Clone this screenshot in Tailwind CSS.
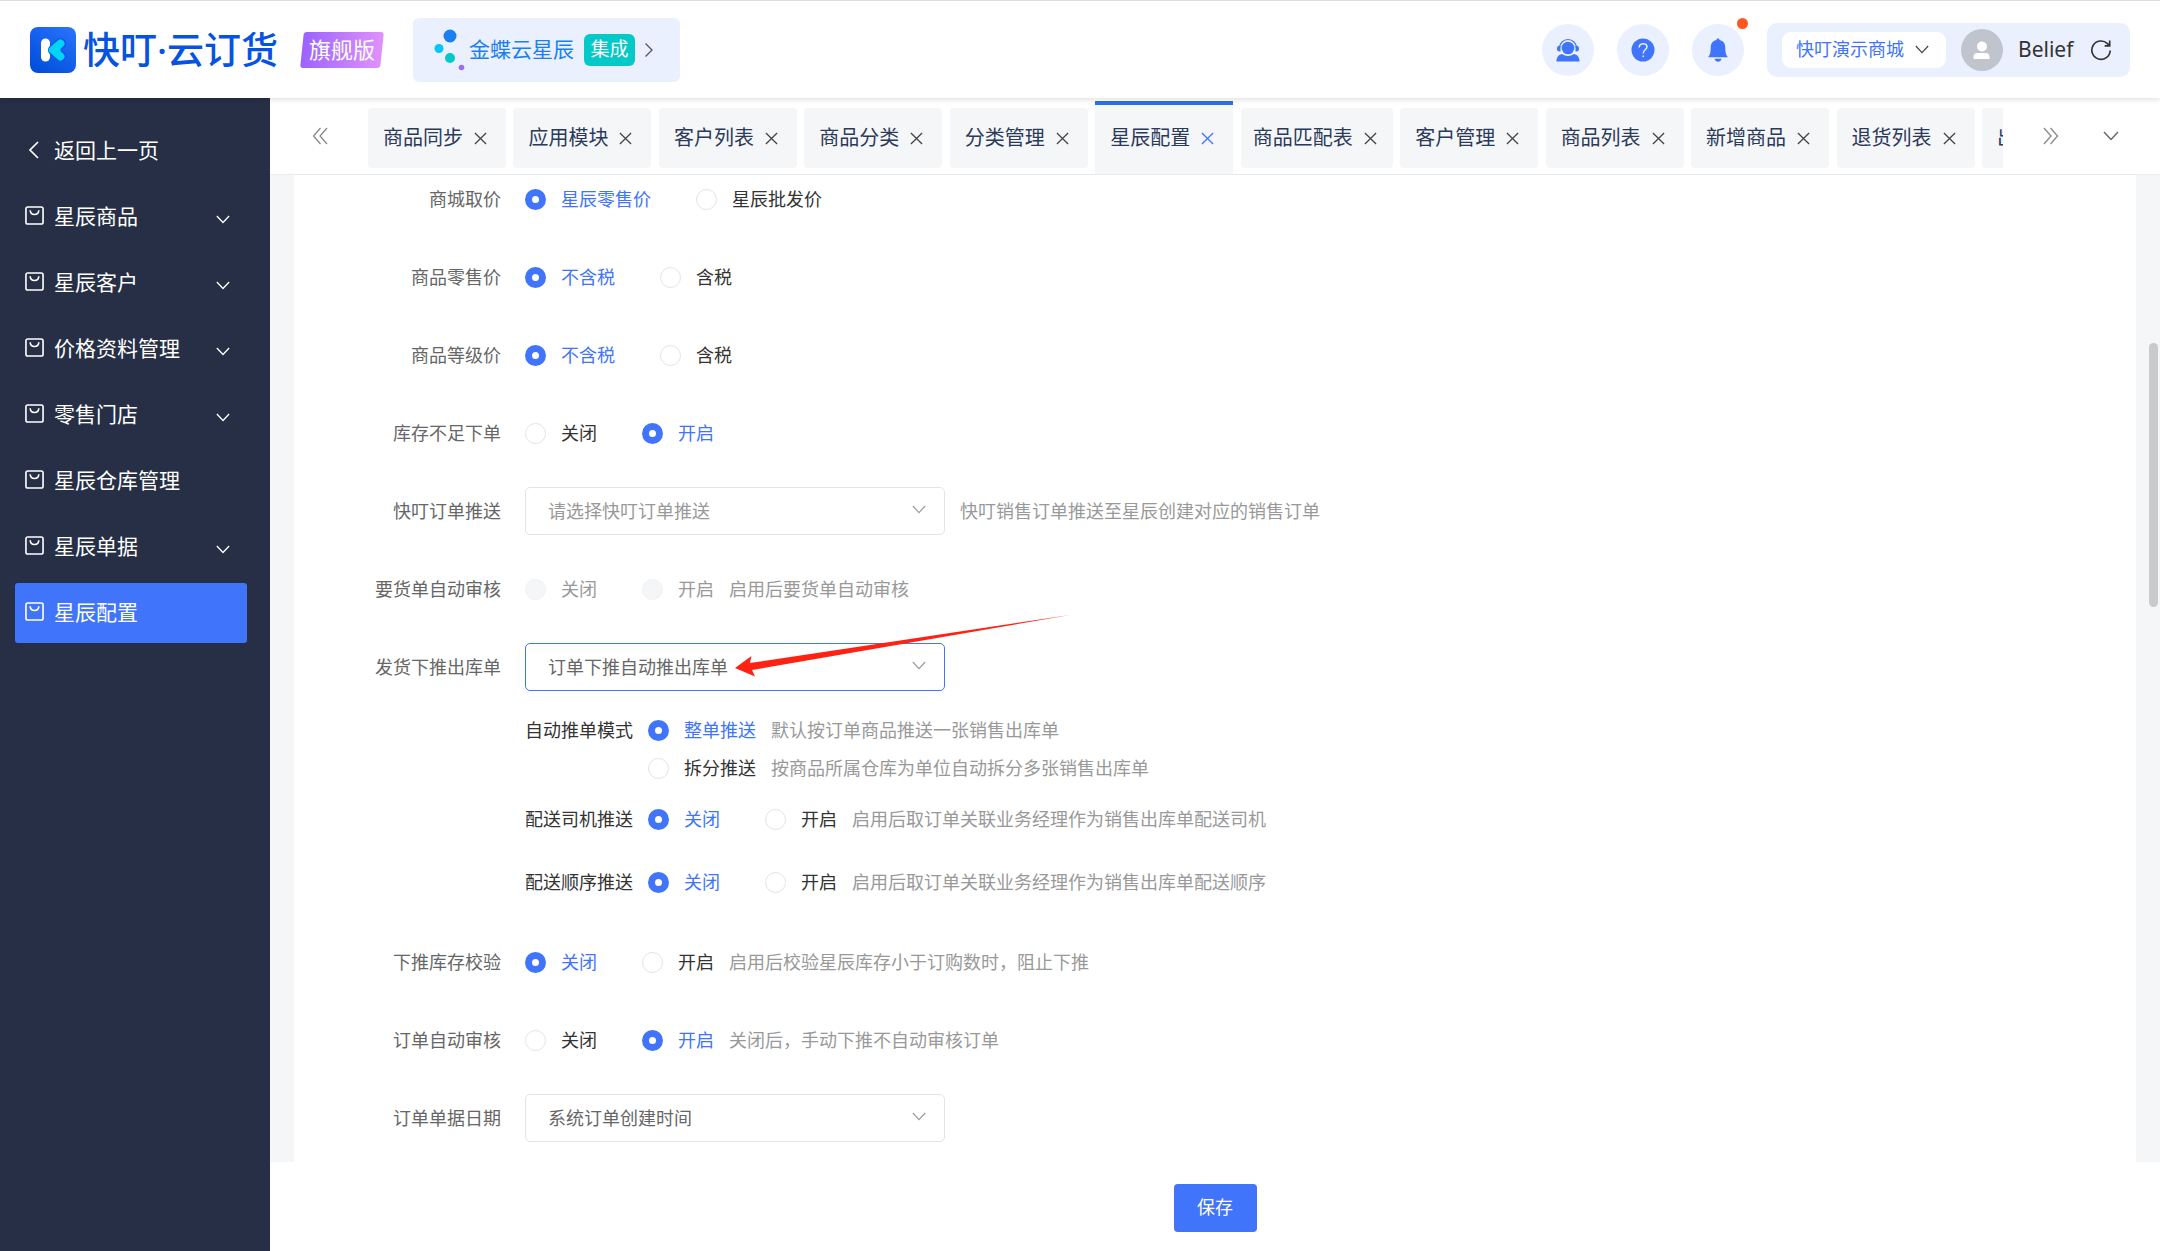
<!DOCTYPE html>
<html lang="zh-CN">
<head>
  <meta charset="UTF-8" />
  <meta name="viewport" content="width=device-width, initial-scale=1.0"/>
  <title>星辰配置 - 快叮云订货</title>
  <script src="https://cdn.jsdelivr.net/npm/@tailwindcss/browser@4"></script>
</head>
<body class="h-screen flex flex-col overflow-hidden bg-white text-[18px] text-[#333] font-['Noto_Sans','Noto_Sans_CJK_SC',sans-serif]">

  <!-- Shared icons -->
  <svg class="hidden" fill="none" stroke="currentColor">
    <symbol id="down" viewBox="0 0 16 10"><path d="M1 1l7 7.500l7-7.500" /></symbol>
    <symbol id="close" viewBox="0 0 14 14"><path d="M1 1l12 12M13 1l-12 12" /></symbol>
    <symbol id="bag" viewBox="0 0 20 20"><rect x="1" y="1" width="18" height="18" rx="2" /><path d="M5.500 4.500c0 6 9 6 9 0" /></symbol>
  </svg>

  <header class="relative z-10 h-[98px] shrink-0 flex items-center pl-[30px] pr-[30px] bg-white border-t border-[#ddd] shadow-[0_1px_6px_rgba(0,0,0,0.15)]">
    <a href="#" class="flex items-center gap-[7px] text-[#0553e0]">
      <svg class="size-[46px]" viewBox="0 0 46 46">
        <defs>
          <linearGradient id="logoBg" x1="1" y1="0" x2="0.300" y2="1"><stop stop-color="#2b74ff" /><stop offset="1" stop-color="#0250dc" /></linearGradient>
        </defs>
        <rect width="46" height="46" rx="8" fill="url(#logoBg)" />
        <path d="M15.500 16v14" stroke="#fff" stroke-width="9" stroke-linecap="round" />
        <path d="M30.500 16.500l-7 6.500l7 6.500" fill="#00d5f7" stroke="#0a58e4" stroke-width="11" stroke-linecap="round" stroke-linejoin="round" />
        <path d="M30.500 16.500l-7.500 6.500l7.500 6.500" fill="#00d5f7" stroke="#00d5f7" stroke-width="8" stroke-linecap="round" stroke-linejoin="round" />
      </svg>
      <span class="text-[37px] leading-[46px] font-medium whitespace-nowrap">快叮·云订货</span>
    </a>
    <div class="relative isolate ml-[22px] h-9 w-[84px] flex items-center justify-center text-[22px] text-white whitespace-nowrap">
      <span class="absolute inset-x-[2px] inset-y-0 -z-10 rounded-[3px] -skew-x-6 bg-linear-to-r from-[#9c62ff] to-[#e090fb]"></span>
      旗舰版
    </div>
    <a href="#" class="ml-[29px] h-16 w-[267px] flex items-center pl-[21px] rounded-md bg-[#eaf0fe] text-[21px] text-[#1a80f2] whitespace-nowrap">
      <svg class="w-[32px] h-[44px] shrink-0" viewBox="0 0 32 44">
        <circle cx="16" cy="8" r="6.500" fill="#1a80f2" />
        <circle cx="5" cy="20.500" r="4.500" fill="#04c6fd" />
        <circle cx="16" cy="30" r="5" fill="#05c8c8" />
        <circle cx="27.500" cy="39.500" r="2.800" fill="#9d6cf0" />
      </svg>
      <span class="ml-[3px]">金蝶云星辰</span>
      <span class="ml-[10px] h-8 w-[51px] flex items-center justify-center rounded-md bg-[#05c8c8] text-[19px] text-white">集成</span>
      <svg class="ml-[9px] w-[10px] h-4" viewBox="0 0 10 16" fill="none" stroke="#555" stroke-width="1.300"><path d="M1.500 1.500l6.500 6.500l-6.500 6.500" /></svg>
    </a>

    <div class="ml-auto flex items-center gap-[23px]">
      <button aria-label="客服" class="size-[52px] rounded-full bg-[#eaf0fe] flex items-center justify-center">
        <svg class="size-6" viewBox="0 0 24 24" fill="#4074fb">
          <circle cx="12" cy="10" r="6.300" />
          <path d="M3.500 10a8.500 8.500 0 0 1 17 0" fill="none" stroke="#4074fb" stroke-width="1.200" />
          <path d="M4.500 7.500v6c-3 0-3.500-1.200-3.500-3s1-3 3.500-3zM19.500 7.500v6c3 0 3.500-1.200 3.500-3s-1-3-3.500-3z" />
          <path d="M.5 23.500c0-4 1.500-6.500 5.500-7.500c3.500 2.600 8.500 2.600 12 0c4 1 5.500 3.500 5.500 7.500z" />
        </svg>
      </button>
      <button aria-label="帮助" class="size-[52px] rounded-full bg-[#eaf0fe] flex items-center justify-center">
        <svg class="size-6" viewBox="0 0 24 24" fill="none">
          <circle cx="12" cy="12" r="11.500" fill="#4074fb" />
          <path d="M8.200 9.500c0-5 7.800-5 7.800-.8c0 3-3.800 3.200-3.800 6.800M12.200 17.500v1.500" stroke="#eaf0fe" stroke-width="1.500" />
        </svg>
      </button>
      <button aria-label="消息" class="relative size-[52px] rounded-full bg-[#eaf0fe] flex items-center justify-center">
        <svg class="size-6" viewBox="0 0 24 24" fill="#4074fb">
          <path d="M12 0.500c1 0 1.500.7 1.600 1.600c4 .8 5.700 3.800 5.700 7.500c0 5 .5 7 2.200 8.900v.8h-19v-.8c1.700-1.900 2.200-3.900 2.200-8.900c0-3.700 1.700-6.700 5.700-7.500c.1-.9.6-1.600 1.600-1.600z" />
          <path d="M8.500 20.700h7c-.5 4-6.500 4-7 0z" />
        </svg>
        <span class="absolute -top-[6px] -right-[4px] size-[11px] rounded-full bg-[#ff5722]"></span>
      </button>
      <div class="h-[54px] flex items-center pl-[15px] pr-[18px] rounded-[10px] bg-[#eaf0fe]">
        <button class="h-9 w-[164px] flex items-center pl-[14px] gap-[11px] rounded-[9px] bg-white text-[#4074fb] whitespace-nowrap">
          快叮演示商城
          <svg class="w-[14px] h-[9px] text-[#444]" fill="none" stroke="currentColor" stroke-width="1.400"><use href="#down" /></svg>
        </button>
        <svg class="ml-[15px] size-[42px]" viewBox="0 0 42 42">
          <circle cx="21" cy="21" r="21" fill="#c0c4cc" />
          <circle cx="21" cy="17.500" r="5" fill="#fff" />
          <path d="M12.500 30v-2c0-2.500 1.500-4 4-4h8c2.500 0 4 1.500 4 4v2z" fill="#fff" />
        </svg>
        <span class="ml-[15px] w-[58px] text-[21px] whitespace-nowrap">Belief</span>
        <button aria-label="刷新" class="ml-[14px]">
          <svg class="size-[22px]" viewBox="0 0 24 24" fill="none" stroke="#333" stroke-width="1.800"><path d="M22 12.500a10 10 0 1 1-3-7.500l2 2M21.500 1.500v6h-5.500" /></svg>
        </button>
      </div>
    </div>
  </header>

  <div class="flex-1 min-h-0 flex">
    <!-- Sidebar -->
    <aside class="w-[270px] shrink-0 bg-[#262f45] pl-[15px] pr-[23px] pt-[23px] text-[21px] text-white">
      <nav class="flex flex-col gap-[6px]">
        <a href="#" class="h-[60px] flex items-center pl-[12px] gap-[13px]">
          <svg class="mb-[3px] w-[14px] h-5" viewBox="0 0 14 20" fill="none" stroke="currentColor" stroke-width="1.700"><path d="M11 2l-8 8l8 8" /></svg>
          返回上一页
        </a>
        <a href="#" class="h-[60px] flex items-center pl-[10px] pr-[17px] gap-[10px]">
          <svg class="mb-[3px] size-[19px]" fill="none" stroke="currentColor" stroke-width="1.700"><use href="#bag" /></svg>
          星辰商品
          <svg class="ml-auto mt-[5px] w-[14px] h-[9px]" fill="none" stroke="currentColor" stroke-width="1.500"><use href="#down" /></svg>
        </a>
        <a href="#" class="h-[60px] flex items-center pl-[10px] pr-[17px] gap-[10px]">
          <svg class="mb-[3px] size-[19px]" fill="none" stroke="currentColor" stroke-width="1.700"><use href="#bag" /></svg>
          星辰客户
          <svg class="ml-auto mt-[5px] w-[14px] h-[9px]" fill="none" stroke="currentColor" stroke-width="1.500"><use href="#down" /></svg>
        </a>
        <a href="#" class="h-[60px] flex items-center pl-[10px] pr-[17px] gap-[10px]">
          <svg class="mb-[3px] size-[19px]" fill="none" stroke="currentColor" stroke-width="1.700"><use href="#bag" /></svg>
          价格资料管理
          <svg class="ml-auto mt-[5px] w-[14px] h-[9px]" fill="none" stroke="currentColor" stroke-width="1.500"><use href="#down" /></svg>
        </a>
        <a href="#" class="h-[60px] flex items-center pl-[10px] pr-[17px] gap-[10px]">
          <svg class="mb-[3px] size-[19px]" fill="none" stroke="currentColor" stroke-width="1.700"><use href="#bag" /></svg>
          零售门店
          <svg class="ml-auto mt-[5px] w-[14px] h-[9px]" fill="none" stroke="currentColor" stroke-width="1.500"><use href="#down" /></svg>
        </a>
        <a href="#" class="h-[60px] flex items-center pl-[10px] pr-[17px] gap-[10px]">
          <svg class="mb-[3px] size-[19px]" fill="none" stroke="currentColor" stroke-width="1.700"><use href="#bag" /></svg>
          星辰仓库管理
        </a>
        <a href="#" class="h-[60px] flex items-center pl-[10px] pr-[17px] gap-[10px]">
          <svg class="mb-[3px] size-[19px]" fill="none" stroke="currentColor" stroke-width="1.700"><use href="#bag" /></svg>
          星辰单据
          <svg class="ml-auto mt-[5px] w-[14px] h-[9px]" fill="none" stroke="currentColor" stroke-width="1.500"><use href="#down" /></svg>
        </a>
        <a href="#" class="h-[60px] flex items-center pl-[10px] pr-[17px] gap-[10px] rounded-[3px] bg-[#4074fb]">
          <svg class="mb-[3px] size-[19px]" fill="none" stroke="currentColor" stroke-width="1.700"><use href="#bag" /></svg>
          星辰配置
        </a>
      </nav>
    </aside>

    <div class="flex-1 min-w-0 flex flex-col">
      <!-- Open pages -->
      <div class="h-[77px] shrink-0 flex items-center border-b border-[#ebebeb] text-[20px] text-[#2c3a5a]">
        <button aria-label="向左" class="w-[98px] shrink-0 pl-[42px]">
          <svg class="w-4 h-[18px]" viewBox="0 0 16 18" fill="none" stroke="#888" stroke-width="1.300"><path d="M8.500 1l-7 8l7 8M15 1l-7 8l7 8" /></svg>
        </button>
        <div class="flex-1 min-w-0 h-full flex items-center justify-between pt-1 overflow-hidden whitespace-nowrap">
          <div class="h-[60px] w-[138px] shrink-0 flex items-center pl-[15px] gap-[11px] rounded-[4px] bg-[#f5f6f8]">商品同步<button aria-label="关闭"><svg class="size-[13px] text-[#444]" fill="none" stroke="currentColor" stroke-width="1.400"><use href="#close" /></svg></button></div>
          <div class="h-[60px] w-[138px] shrink-0 flex items-center pl-[15px] gap-[11px] rounded-[4px] bg-[#f5f6f8]">应用模块<button aria-label="关闭"><svg class="size-[13px] text-[#444]" fill="none" stroke="currentColor" stroke-width="1.400"><use href="#close" /></svg></button></div>
          <div class="h-[60px] w-[138px] shrink-0 flex items-center pl-[15px] gap-[11px] rounded-[4px] bg-[#f5f6f8]">客户列表<button aria-label="关闭"><svg class="size-[13px] text-[#444]" fill="none" stroke="currentColor" stroke-width="1.400"><use href="#close" /></svg></button></div>
          <div class="h-[60px] w-[138px] shrink-0 flex items-center pl-[15px] gap-[11px] rounded-[4px] bg-[#f5f6f8]">商品分类<button aria-label="关闭"><svg class="size-[13px] text-[#444]" fill="none" stroke="currentColor" stroke-width="1.400"><use href="#close" /></svg></button></div>
          <div class="h-[60px] w-[138px] shrink-0 flex items-center pl-[15px] gap-[11px] rounded-[4px] bg-[#f5f6f8]">分类管理<button aria-label="关闭"><svg class="size-[13px] text-[#444]" fill="none" stroke="currentColor" stroke-width="1.400"><use href="#close" /></svg></button></div>
          <div class="h-[73px] w-[138px] shrink-0 self-end flex items-center pl-[15px] pb-[3px] gap-[11px] border-t-4 border-[#2b72e6] bg-[#f5f6f8]">星辰配置<button aria-label="关闭"><svg class="size-[13px] text-[#4074fb]" fill="none" stroke="currentColor" stroke-width="1.400"><use href="#close" /></svg></button></div>
          <div class="h-[60px] w-[152px] shrink-0 flex items-center pl-[12px] gap-[11px] rounded-[4px] bg-[#f5f6f8]">商品匹配表<button aria-label="关闭"><svg class="size-[13px] text-[#444]" fill="none" stroke="currentColor" stroke-width="1.400"><use href="#close" /></svg></button></div>
          <div class="h-[60px] w-[138px] shrink-0 flex items-center pl-[15px] gap-[11px] rounded-[4px] bg-[#f5f6f8]">客户管理<button aria-label="关闭"><svg class="size-[13px] text-[#444]" fill="none" stroke="currentColor" stroke-width="1.400"><use href="#close" /></svg></button></div>
          <div class="h-[60px] w-[138px] shrink-0 flex items-center pl-[15px] gap-[11px] rounded-[4px] bg-[#f5f6f8]">商品列表<button aria-label="关闭"><svg class="size-[13px] text-[#444]" fill="none" stroke="currentColor" stroke-width="1.400"><use href="#close" /></svg></button></div>
          <div class="h-[60px] w-[138px] shrink-0 flex items-center pl-[15px] gap-[11px] rounded-[4px] bg-[#f5f6f8]">新增商品<button aria-label="关闭"><svg class="size-[13px] text-[#444]" fill="none" stroke="currentColor" stroke-width="1.400"><use href="#close" /></svg></button></div>
          <div class="h-[60px] w-[138px] shrink-0 flex items-center pl-[15px] gap-[11px] rounded-[4px] bg-[#f5f6f8]">退货列表<button aria-label="关闭"><svg class="size-[13px] text-[#444]" fill="none" stroke="currentColor" stroke-width="1.400"><use href="#close" /></svg></button></div>
          <div class="h-[60px] w-[21px] shrink-0 flex items-center pl-[15px] overflow-hidden rounded-l-[4px] bg-[#f5f6f8]">出</div>
        </div>
        <button aria-label="向右" class="ml-10 shrink-0">
          <svg class="w-4 h-[18px]" viewBox="0 0 16 18" fill="none" stroke="#888" stroke-width="1.300"><path d="M1 1l7 8l-7 8M7.500 1l7 8l-7 8" /></svg>
        </button>
        <button aria-label="更多" class="ml-[44px] mr-[41px] shrink-0">
          <svg class="w-4 h-[10px] text-[#666]" fill="none" stroke="currentColor" stroke-width="1.400"><use href="#down" /></svg>
        </button>
      </div>

      <!-- Settings form -->
      <main class="relative flex-1 min-h-0 overflow-hidden px-6 bg-[#f5f6f8]">
        <form id="config" class="h-full flex flex-col gap-[30px] bg-white text-[#666]">
          <div class="h-12 shrink-0 flex items-center">
            <span class="w-[207px] mr-6 text-right">商城取价</span>
            <label class="flex items-center gap-[15px] mr-[45px] text-[#333] has-checked:text-[#4074fb]"><input type="radio" name="price" checked class="appearance-none size-[21px] rounded-full border border-[#e4e4e4] bg-white checked:border-[7px] checked:border-[#4074fb]" />星辰零售价</label>
            <label class="flex items-center gap-[15px] text-[#333] has-checked:text-[#4074fb]"><input type="radio" name="price" class="appearance-none size-[21px] rounded-full border border-[#e4e4e4] bg-white checked:border-[7px] checked:border-[#4074fb]" />星辰批发价</label>
          </div>
          <div class="h-12 shrink-0 flex items-center">
            <span class="w-[207px] mr-6 text-right">商品零售价</span>
            <label class="flex items-center gap-[15px] mr-[45px] text-[#333] has-checked:text-[#4074fb]"><input type="radio" name="retail" checked class="appearance-none size-[21px] rounded-full border border-[#e4e4e4] bg-white checked:border-[7px] checked:border-[#4074fb]" />不含税</label>
            <label class="flex items-center gap-[15px] text-[#333] has-checked:text-[#4074fb]"><input type="radio" name="retail" class="appearance-none size-[21px] rounded-full border border-[#e4e4e4] bg-white checked:border-[7px] checked:border-[#4074fb]" />含税</label>
          </div>
          <div class="h-12 shrink-0 flex items-center">
            <span class="w-[207px] mr-6 text-right">商品等级价</span>
            <label class="flex items-center gap-[15px] mr-[45px] text-[#333] has-checked:text-[#4074fb]"><input type="radio" name="level" checked class="appearance-none size-[21px] rounded-full border border-[#e4e4e4] bg-white checked:border-[7px] checked:border-[#4074fb]" />不含税</label>
            <label class="flex items-center gap-[15px] text-[#333] has-checked:text-[#4074fb]"><input type="radio" name="level" class="appearance-none size-[21px] rounded-full border border-[#e4e4e4] bg-white checked:border-[7px] checked:border-[#4074fb]" />含税</label>
          </div>
          <div class="h-12 shrink-0 flex items-center">
            <span class="w-[207px] mr-6 text-right">库存不足下单</span>
            <label class="flex items-center gap-[15px] mr-[45px] text-[#333] has-checked:text-[#4074fb]"><input type="radio" name="stock" class="appearance-none size-[21px] rounded-full border border-[#e4e4e4] bg-white checked:border-[7px] checked:border-[#4074fb]" />关闭</label>
            <label class="flex items-center gap-[15px] text-[#333] has-checked:text-[#4074fb]"><input type="radio" name="stock" checked class="appearance-none size-[21px] rounded-full border border-[#e4e4e4] bg-white checked:border-[7px] checked:border-[#4074fb]" />开启</label>
          </div>
          <div class="h-12 shrink-0 flex items-center">
            <label for="push" class="w-[207px] mr-6 text-right">快叮订单推送</label>
            <div class="relative w-[420px]">
              <select id="push" class="appearance-none w-full h-12 pl-[22px] rounded-[5px] border border-[#e4e4e4] bg-white text-[#999]"><option>请选择快叮订单推送</option></select>
              <svg class="absolute right-[19px] top-[18px] w-[14px] h-[9px] text-[#999] pointer-events-none" fill="none" stroke="currentColor" stroke-width="1.300"><use href="#down" /></svg>
            </div>
            <span class="ml-[15px] text-[#999]">快叮销售订单推送至星辰创建对应的销售订单</span>
          </div>
          <div class="h-12 shrink-0 flex items-center">
            <span class="w-[207px] mr-6 text-right">要货单自动审核</span>
            <label class="flex items-center gap-[15px] mr-[45px] text-[#999]"><input type="radio" name="goods" disabled class="appearance-none size-[21px] rounded-full border border-[#f0f1f3] bg-[#f5f6f8]" />关闭</label>
            <label class="flex items-center gap-[15px] text-[#999]"><input type="radio" name="goods" disabled class="appearance-none size-[21px] rounded-full border border-[#f0f1f3] bg-[#f5f6f8]" />开启</label>
            <span class="ml-[15px] text-[#999]">启用后要货单自动审核</span>
          </div>

          <div class="shrink-0 pb-[2px]">
            <div class="h-12 flex items-center">
              <label for="outbound" class="w-[207px] mr-6 text-right">发货下推出库单</label>
              <div class="relative w-[420px]">
                <select id="outbound" class="appearance-none w-full h-12 pl-[22px] rounded-[5px] border border-[#4074fb] bg-white text-[#666]"><option>订单下推自动推出库单</option></select>
                <svg class="absolute right-[19px] top-[18px] w-[14px] h-[9px] text-[#999] pointer-events-none" fill="none" stroke="currentColor" stroke-width="1.300"><use href="#down" /></svg>
                <!-- Pointer to the selected value -->
                <svg class="absolute left-[210px] -top-7 w-[336px] h-[62px] max-w-none pointer-events-none" viewBox="0 0 336 62" fill="#ff2112"><path d="M0 53l16.500-12l-1.500 7l320-48l-318 55l3 6.500z" /></svg>
              </div>
            </div>
            <div class="pl-[231px] pt-5 text-[#333]">
              <div class="flex">
                <span class="h-[38px] flex items-center mr-[15px]">自动推单模式</span>
                <div>
                  <div class="h-[38px] flex items-center">
                    <label class="flex items-center gap-[15px] text-[#333] has-checked:text-[#4074fb]"><input type="radio" name="mode" checked class="appearance-none size-[21px] rounded-full border border-[#e4e4e4] bg-white checked:border-[7px] checked:border-[#4074fb]" />整单推送</label>
                    <span class="ml-[15px] text-[#999]">默认按订单商品推送一张销售出库单</span>
                  </div>
                  <div class="h-[38px] flex items-center">
                    <label class="flex items-center gap-[15px] text-[#333] has-checked:text-[#4074fb]"><input type="radio" name="mode" class="appearance-none size-[21px] rounded-full border border-[#e4e4e4] bg-white checked:border-[7px] checked:border-[#4074fb]" />拆分推送</label>
                    <span class="ml-[15px] text-[#999]">按商品所属仓库为单位自动拆分多张销售出库单</span>
                  </div>
                </div>
              </div>
              <div class="mt-2 h-12 flex items-center">
                <span class="mr-[15px]">配送司机推送</span>
                <label class="flex items-center gap-[15px] mr-[45px] has-checked:text-[#4074fb]"><input type="radio" name="driver" checked class="appearance-none size-[21px] rounded-full border border-[#e4e4e4] bg-white checked:border-[7px] checked:border-[#4074fb]" />关闭</label>
                <label class="flex items-center gap-[15px] has-checked:text-[#4074fb]"><input type="radio" name="driver" class="appearance-none size-[21px] rounded-full border border-[#e4e4e4] bg-white checked:border-[7px] checked:border-[#4074fb]" />开启</label>
                <span class="ml-[15px] text-[#999]">启用后取订单关联业务经理作为销售出库单配送司机</span>
              </div>
              <div class="mt-[15px] h-12 flex items-center">
                <span class="mr-[15px]">配送顺序推送</span>
                <label class="flex items-center gap-[15px] mr-[45px] has-checked:text-[#4074fb]"><input type="radio" name="sequence" checked class="appearance-none size-[21px] rounded-full border border-[#e4e4e4] bg-white checked:border-[7px] checked:border-[#4074fb]" />关闭</label>
                <label class="flex items-center gap-[15px] has-checked:text-[#4074fb]"><input type="radio" name="sequence" class="appearance-none size-[21px] rounded-full border border-[#e4e4e4] bg-white checked:border-[7px] checked:border-[#4074fb]" />开启</label>
                <span class="ml-[15px] text-[#999]">启用后取订单关联业务经理作为销售出库单配送顺序</span>
              </div>
            </div>
          </div>

          <div class="h-12 shrink-0 flex items-center">
            <span class="w-[207px] mr-6 text-right">下推库存校验</span>
            <label class="flex items-center gap-[15px] mr-[45px] text-[#333] has-checked:text-[#4074fb]"><input type="radio" name="check" checked class="appearance-none size-[21px] rounded-full border border-[#e4e4e4] bg-white checked:border-[7px] checked:border-[#4074fb]" />关闭</label>
            <label class="flex items-center gap-[15px] text-[#333] has-checked:text-[#4074fb]"><input type="radio" name="check" class="appearance-none size-[21px] rounded-full border border-[#e4e4e4] bg-white checked:border-[7px] checked:border-[#4074fb]" />开启</label>
            <span class="ml-[15px] text-[#999]">启用后校验星辰库存小于订购数时，阻止下推</span>
          </div>
          <div class="h-12 shrink-0 flex items-center">
            <span class="w-[207px] mr-6 text-right">订单自动审核</span>
            <label class="flex items-center gap-[15px] mr-[45px] text-[#333] has-checked:text-[#4074fb]"><input type="radio" name="audit" class="appearance-none size-[21px] rounded-full border border-[#e4e4e4] bg-white checked:border-[7px] checked:border-[#4074fb]" />关闭</label>
            <label class="flex items-center gap-[15px] text-[#333] has-checked:text-[#4074fb]"><input type="radio" name="audit" checked class="appearance-none size-[21px] rounded-full border border-[#e4e4e4] bg-white checked:border-[7px] checked:border-[#4074fb]" />开启</label>
            <span class="ml-[15px] text-[#999]">关闭后，手动下推不自动审核订单</span>
          </div>
          <div class="h-12 shrink-0 flex items-center">
            <label for="date" class="w-[207px] mr-6 text-right">订单单据日期</label>
            <div class="relative w-[420px]">
              <select id="date" class="appearance-none w-full h-12 pl-[22px] rounded-[5px] border border-[#e4e4e4] bg-white text-[#666]"><option>系统订单创建时间</option></select>
              <svg class="absolute right-[19px] top-[18px] w-[14px] h-[9px] text-[#999] pointer-events-none" fill="none" stroke="currentColor" stroke-width="1.300"><use href="#down" /></svg>
            </div>
          </div>
        </form>
        <!-- Scroll thumb -->
        <span class="absolute right-[2px] top-[168px] w-[9px] h-[264px] rounded-full bg-[#c9cacc]"></span>
      </main>

      <footer class="h-[89px] shrink-0 flex items-center justify-center pt-[2px] bg-white">
        <button form="config" class="h-12 w-[83px] rounded-[4px] bg-[#4074fb] text-white">保存</button>
      </footer>
    </div>
  </div>
</body>
</html>
